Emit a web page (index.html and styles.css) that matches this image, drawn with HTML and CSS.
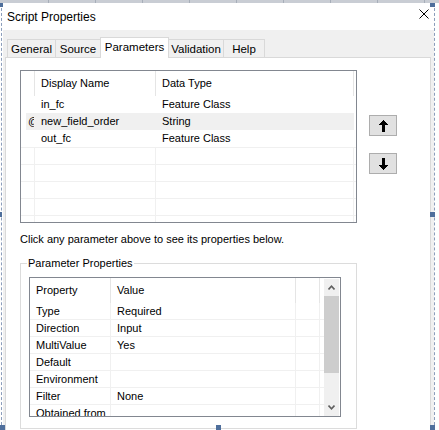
FILE: index.html
```html
<!DOCTYPE html>
<html>

<head>
    <meta charset="UTF-8">
    <link rel="stylesheet" href="styles.css">
</head>

<body>
    <div class="ruler"></div>
    <div class="frame">
        <div class="dialog">
            <div class="titlebar">
                <span class="title">Script Properties</span>
                <svg class="close" width="10" height="10" viewBox="0 0 10 10">
                    <path d="M0.5 0.5L9.5 9.5M9.5 0.5L0.5 9.5" stroke="#000" stroke-width="1" fill="none"/>
                </svg>
            </div>

            <div class="tabs">
                <div class="tab t-general">General</div>
                <div class="tab t-source">Source</div>
                <div class="tab t-params active">Parameters</div>
                <div class="tab t-valid">Validation</div>
                <div class="tab t-help">Help</div>
            </div>

            <div class="panel">
                <div class="params-area">
                    <div class="pgrid">
                        <div class="prow phead">
                            <div class="c0"></div>
                            <div class="c1">Display Name</div>
                            <div class="c2">Data Type</div>
                            <div class="c3"></div>
                        </div>
                        <div class="prow">
                            <div class="c0"></div>
                            <div class="c1">in_fc</div>
                            <div class="c2">Feature Class</div>
                            <div class="c3"></div>
                        </div>
                        <div class="prow sel">
                            <div class="c0"><span class="mark">@</span></div>
                            <div class="c1">new_field_order</div>
                            <div class="c2">String</div>
                            <div class="c3"></div>
                        </div>
                        <div class="prow">
                            <div class="c0"></div>
                            <div class="c1">out_fc</div>
                            <div class="c2">Feature Class</div>
                            <div class="c3"></div>
                        </div>
                        <div class="prow empty"><div class="c0"></div><div class="c1"></div><div class="c2"></div><div class="c3"></div></div>
                        <div class="prow empty"><div class="c0"></div><div class="c1"></div><div class="c2"></div><div class="c3"></div></div>
                        <div class="prow empty"><div class="c0"></div><div class="c1"></div><div class="c2"></div><div class="c3"></div></div>
                        <div class="prow empty"><div class="c0"></div><div class="c1"></div><div class="c2"></div><div class="c3"></div></div>
                        <div class="prow empty"><div class="c0"></div><div class="c1"></div><div class="c2"></div><div class="c3"></div></div>
                    </div>

                    <div class="movers">
                        <button class="mover" type="button">
                            <svg width="9" height="12" viewBox="0 0 9 12" shape-rendering="crispEdges">
                                <polygon points="4.5,0 9,5 6,5 6,12 3,12 3,5 0,5" fill="#000"/>
                            </svg>
                        </button>
                        <button class="mover" type="button">
                            <svg width="9" height="12" viewBox="0 0 9 12" shape-rendering="crispEdges">
                                <polygon points="4.5,12 9,7 6,7 6,0 3,0 3,7 0,7" fill="#000"/>
                            </svg>
                        </button>
                    </div>
                </div>

                <p class="hint">Click any parameter above to see its properties below.</p>

                <fieldset class="group">
                    <legend>Parameter Properties</legend>
                    <div class="props">
                        <div class="props-body">
                            <div class="rrow rhead">
                                <div class="k">Property</div>
                                <div class="v">Value</div>
                                <div class="x"></div>
                                <div class="y"></div>
                            </div>
                            <div class="rrow"><div class="k">Type</div><div class="v">Required</div><div class="x"></div><div class="y"></div></div>
                            <div class="rrow"><div class="k">Direction</div><div class="v">Input</div><div class="x"></div><div class="y"></div></div>
                            <div class="rrow"><div class="k">MultiValue</div><div class="v">Yes</div><div class="x"></div><div class="y"></div></div>
                            <div class="rrow"><div class="k">Default</div><div class="v"></div><div class="x"></div><div class="y"></div></div>
                            <div class="rrow"><div class="k">Environment</div><div class="v"></div><div class="x"></div><div class="y"></div></div>
                            <div class="rrow"><div class="k">Filter</div><div class="v">None</div><div class="x"></div><div class="y"></div></div>
                            <div class="rrow"><div class="k">Obtained from</div><div class="v"></div><div class="x"></div><div class="y"></div></div>
                        </div>
                        <div class="vscroll">
                            <div class="sb-btn">
                                <svg width="7" height="5" viewBox="0 0 7 5"><path d="M0.5 4.5L3.5 1.2L6.5 4.5" stroke="#606060" stroke-width="1.6" fill="none"/></svg>
                            </div>
                            <div class="sb-thumb"></div>
                            <div class="sb-track"></div>
                            <div class="sb-btn">
                                <svg width="7" height="5" viewBox="0 0 7 5"><path d="M0.5 0.5L3.5 3.8L6.5 0.5" stroke="#606060" stroke-width="1.6" fill="none"/></svg>
                            </div>
                        </div>
                    </div>
                </fieldset>
            </div>
        </div>
    </div>

    <div class="handle h-tl"></div>
    <div class="handle h-tr"></div>
    <div class="handle h-ml"></div>
    <div class="handle h-mr"></div>
    <div class="handle h-bl"></div>
    <div class="handle h-bm"></div>
    <div class="handle h-br"></div>
</body>

</html>
```

FILE: styles.css
```css
* {
    box-sizing: border-box;
}
body {
    position: relative;
    margin: 0;
    width: 439px;
    height: 430px;
    overflow: hidden;
    background: #fff;
    font-family: "Liberation Sans", Arial, sans-serif;
    font-size: 11px;
    line-height: 16px;
    color: #000;
}

/* designer surface */
.ruler {
    height: 3px;
    background: #c9cdd4 repeating-linear-gradient(90deg, transparent 0 46px, #a7aeb9 46px 47px);
    background-position: 2px 0;
}
.frame {
    margin-left: 1px;
    width: 434px;
    padding-left: 1px;
    border-left: 1px dashed #8b9dbb;
    border-right: 1px dashed #8b9dbb;
}
.handle {
    position: absolute;
    width: 5px;
    height: 5px;
    background: #4f6f9c;
}
.h-tl { left: -2px; top: 3px; height: 4px; }
.h-tr { left: 430px; top: 3px; height: 4px; }
.h-ml { left: -3px; top: 212px; }
.h-mr { left: 430px; top: 212px; }
.h-bl { left: 0; top: 425px; }
.h-bm { left: 216px; top: 425px; }
.h-br { left: 430px; top: 425px; }

/* dialog */
.dialog {
    height: 427px;
    background: #f0f0f0;
}
.titlebar {
    display: flex;
    align-items: center;
    justify-content: space-between;
    height: 27px;
    padding: 0 5px 0 4px;
    background: #fff;
}
.title {
    margin-top: 1px;
    font-size: 12px;
}
.close {
    margin-top: -5px;
}

.tabs {
    display: flex;
    align-items: flex-end;
    height: 27px;
    padding-left: 4px;
}
.tab {
    display: flex;
    align-items: center;
    justify-content: center;
    height: 18px;
    margin-right: -1px;
    border: 1px solid #d9d9d9;
    border-bottom: 0;
    background: #f0f0f0;
    font-size: 11.5px;
}
.tab.active {
    position: relative;
    z-index: 1;
    height: 21px;
    margin-bottom: -1px;
    padding-bottom: 3px;
    background: #fff;
}
.t-general { width: 49px; }
.t-source { width: 46px; }
.t-params { width: 69px; }
.t-valid { width: 56px; }
.t-help { width: 42px; }

.panel {
    height: 380px;
    margin: 0 3px 0 2px;
    padding: 12px 0 0 14px;
    border: 1px solid #d9d9d9;
    background: #fff;
}

/* parameter list */
.params-area {
    display: flex;
    align-items: flex-start;
}
.pgrid {
    width: 337px;
    height: 153px;
    overflow: hidden;
    border: 1px solid #828790;
}
.prow {
    display: grid;
    grid-template-columns: 14px 121px 198px 2px;
    height: 17px;
}
.prow > div {
    padding-left: 6px;
    white-space: nowrap;
    overflow: hidden;
    line-height: 17px;
}
.prow .c0 {
    padding-left: 0;
}
.prow.phead {
    height: 25px;
}
.prow.phead > div {
    line-height: 24px;
    border-right: 1px solid #e5e5e5;
}
.prow.phead .c3 {
    border-right: 0;
}
.prow.sel {
    background: linear-gradient(90deg, transparent 5px, #f0f0f0 5px, #f0f0f0 333px, transparent 333px);
}
.mark {
    display: block;
    width: 12px;
    margin-left: 7px;
    overflow: hidden;
    clip-path: inset(0 6px 0 0);
}
.prow.empty {
    border-top: 1px solid #f0f0f0;
}
.prow.empty .c0,
.prow.empty .c1,
.prow.empty .c2 {
    border-right: 1px solid #f0f0f0;
}

.movers {
    display: flex;
    flex-direction: column;
    gap: 17px;
    margin-left: 12px;
    padding-top: 45px;
}
.mover {
    display: flex;
    align-items: center;
    justify-content: center;
    width: 28px;
    height: 21px;
    padding: 0;
    border: 1px solid #adadad;
    background: #e1e1e1;
}

.hint {
    margin: 8px 0 0;
}

/* properties group */
.group {
    width: 337px;
    margin: 8px 0 0;
    padding: 0;
    border: 1px solid #dcdcdc;
}
.group legend {
    margin-left: 6px;
    padding: 0 1px;
}
.props {
    display: flex;
    width: 312px;
    height: 140px;
    margin: 6px 0 11px 8px;
    border: 1px solid #828790;
}
.props-body {
    flex: 1;
    overflow: hidden;
}
.rrow {
    display: grid;
    grid-template-columns: 81px 185px 24px 3px;
    height: 17px;
    border-bottom: 1px solid #f0f0f0;
}
.rrow > div {
    padding-left: 6px;
    white-space: nowrap;
    overflow: hidden;
    line-height: 17px;
    border-right: 1px solid #f0f0f0;
}
.rrow > .y {
    border-right: 0;
}
.rrow.rhead {
    height: 25px;
    border-bottom: 0;
}
.rrow.rhead > div {
    line-height: 25px;
    border-right-color: #e5e5e5;
}
.vscroll {
    display: flex;
    flex-direction: column;
    width: 15px;
    margin: 1px 1px 0 0;
    background: #f0f0f0;
}
.sb-btn {
    display: flex;
    align-items: center;
    justify-content: center;
    height: 17px;
}
.sb-thumb {
    height: 77px;
    background: #cdcdcd;
}
.sb-track {
    flex: 1;
}
```
